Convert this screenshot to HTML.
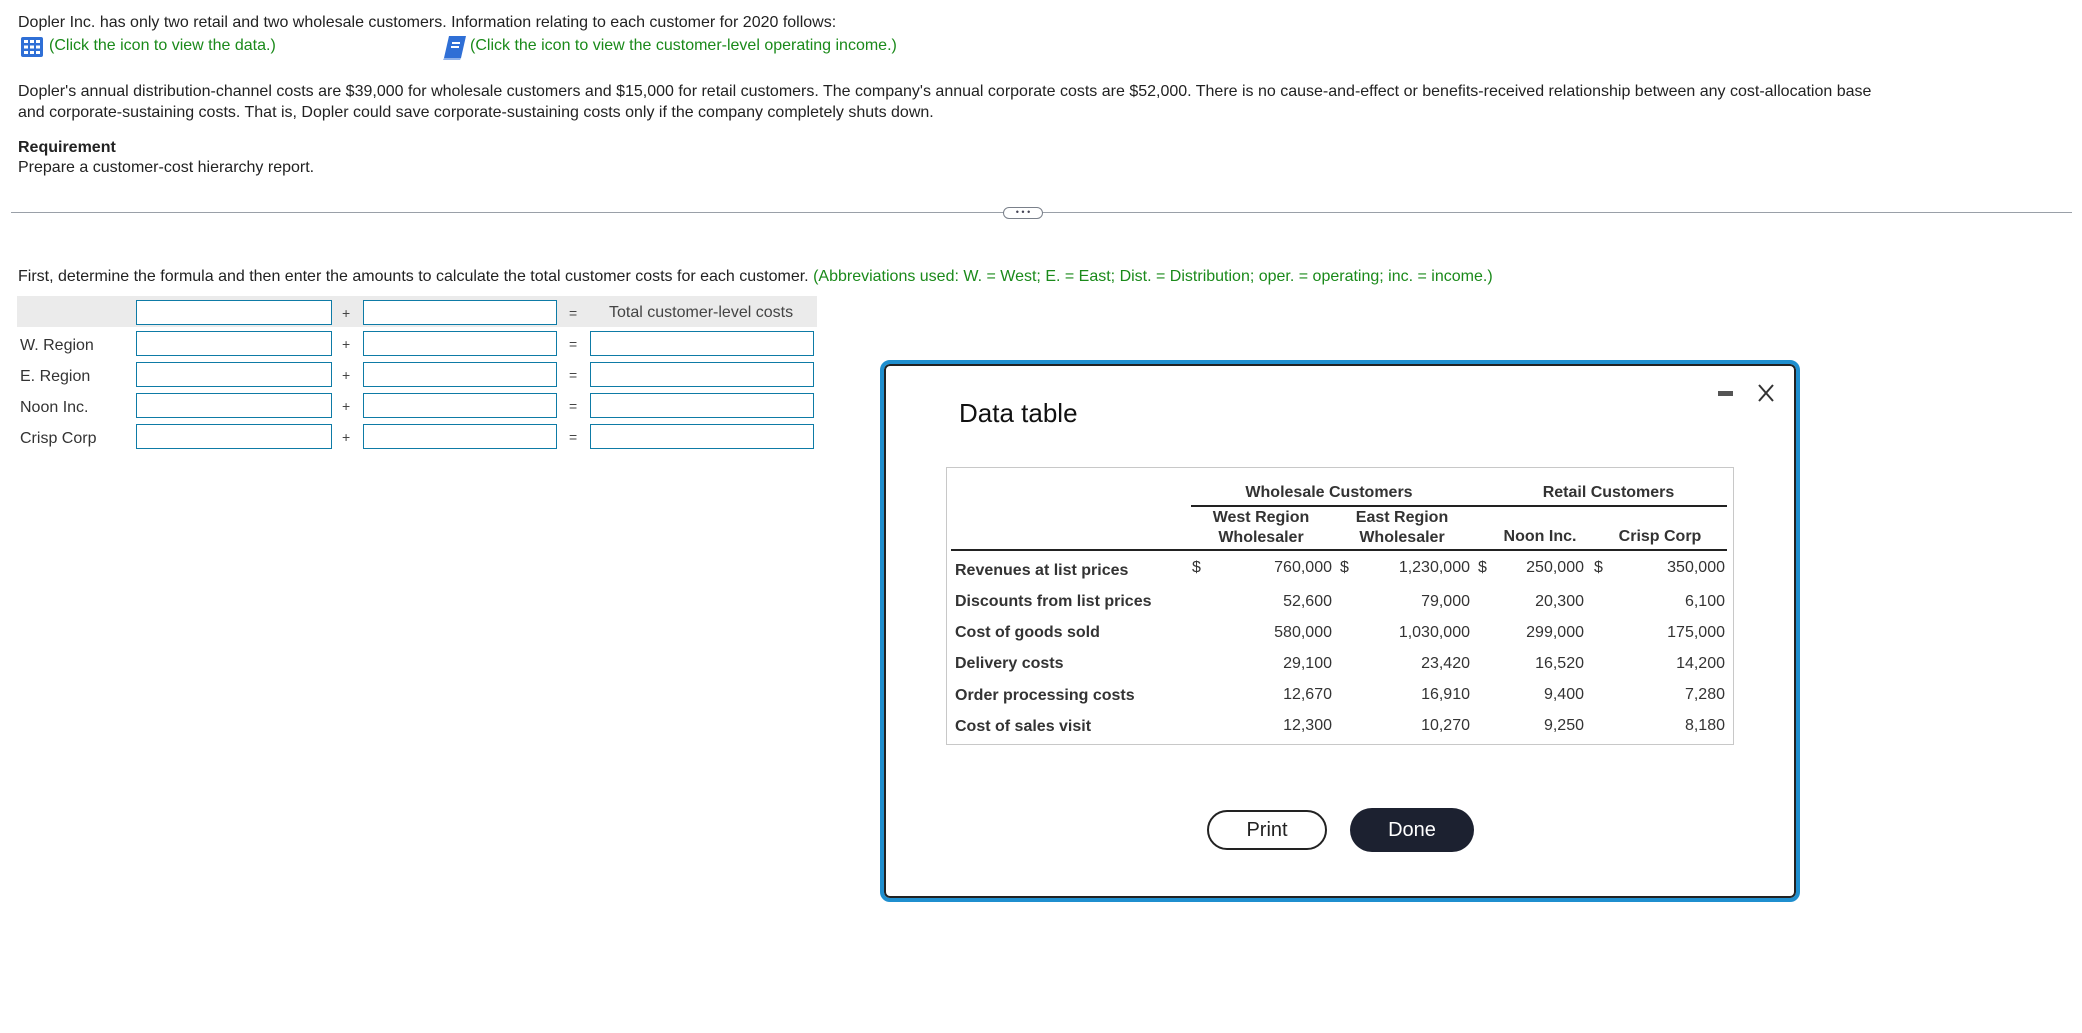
<!DOCTYPE html>
<html><head><meta charset="utf-8"><style>
*{box-sizing:border-box;margin:0;padding:0}
body{width:2082px;height:1033px;background:#fff;font-family:"Liberation Sans",Arial,sans-serif;font-size:16px;color:#222;position:relative;overflow:hidden}
.a{position:absolute;white-space:nowrap}
.g{color:#1a8a1a}
.inp{position:absolute;height:25px;border:1px solid #0e7ba6;background:#fff}
.op{position:absolute;font-size:14px;color:#444}
.lbl{position:absolute;left:20px;color:#333}
.modal{position:absolute;left:880px;top:360px;width:920px;height:542px;border:4px solid #1f8fcf;border-radius:10px;background:#fff;box-shadow:inset 0 0 0 2px #222}
.r{position:absolute;text-align:right;color:#333}
.lb{position:absolute;left:955px;font-weight:bold;color:#333}
</style></head><body>
<div class="a" style="left:18px;top:14px">Dopler Inc. has only two retail and two wholesale customers. Information relating to each customer for 2020 follows:</div>
<svg class="a" style="left:21px;top:37px" width="22" height="20"><rect x="0" y="0" width="22" height="20" rx="2" fill="#2f6fd6"/><g fill="#fff"><rect x="3" y="3" width="4" height="3"/><rect x="9" y="3" width="4" height="3"/><rect x="15" y="3" width="4" height="3"/><rect x="3" y="8.5" width="4" height="3"/><rect x="9" y="8.5" width="4" height="3"/><rect x="15" y="8.5" width="4" height="3"/><rect x="3" y="14" width="4" height="3"/><rect x="9" y="14" width="4" height="3"/><rect x="15" y="14" width="4" height="3"/></g></svg>
<div class="a g" style="left:49px;top:37px">(Click the icon to view the data.)</div>
<svg class="a" style="left:442px;top:35px" width="26" height="26"><path d="M7 1 H24 L19 23 H2 Z" fill="#2f6fd6"/><path d="M2 23 H19 L18 25 H1 Z" fill="#8fb2ea"/><rect x="10" y="7" width="8" height="2" fill="#fff"/><rect x="9" y="11" width="8" height="2" fill="#fff"/></svg>
<div class="a g" style="left:470px;top:37px">(Click the icon to view the customer-level operating income.)</div>
<div class="a" style="left:18px;top:83px">Dopler's annual distribution-channel costs are $39,000 for wholesale customers and $15,000 for retail customers. The company's annual corporate costs are $52,000. There is no cause-and-effect or benefits-received relationship between any cost-allocation base</div>
<div class="a" style="left:18px;top:104px">and corporate-sustaining costs. That is, Dopler could save corporate-sustaining costs only if the company completely shuts down.</div>
<div class="a" style="left:18px;top:139px;font-weight:bold">Requirement</div>
<div class="a" style="left:18px;top:159px">Prepare a customer-cost hierarchy report.</div>
<div class="a" style="left:11px;top:212px;width:2061px;height:1px;background:#9aa0a8"></div>
<div class="a" style="left:1003px;top:207px;width:40px;height:12px;border:1px solid #7a808a;border-radius:6px;background:#fff;font-size:9px;line-height:8px;text-align:center;color:#445">• • •</div>
<div class="a" style="left:18px;top:268px">First, determine the formula and then enter the amounts to calculate the total customer costs for each customer. <span class="g">(Abbreviations used: W. = West; E. = East; Dist. = Distribution; oper. = operating; inc. = income.)</span></div>
<div class="a" style="left:17px;top:296px;width:800px;height:31px;background:#ebebeb"></div>
<div class="inp" style="left:136px;top:300px;width:196px"></div>
<div class="op" style="left:342px;top:305px">+</div>
<div class="inp" style="left:363px;top:300px;width:194px"></div>
<div class="op" style="left:569px;top:305px">=</div>
<div class="a" style="left:609px;top:304px;color:#444;font-size:16px">Total customer-level costs</div>
<div class="lbl" style="top:337px">W. Region</div>
<div class="lbl" style="top:368px">E. Region</div>
<div class="lbl" style="top:399px">Noon Inc.</div>
<div class="lbl" style="top:430px">Crisp Corp</div>
<div class="inp" style="left:136px;top:331px;width:196px"></div><div class="op" style="left:342px;top:336px">+</div><div class="inp" style="left:363px;top:331px;width:194px"></div><div class="op" style="left:569px;top:336px">=</div><div class="inp" style="left:590px;top:331px;width:224px"></div>
<div class="inp" style="left:136px;top:362px;width:196px"></div><div class="op" style="left:342px;top:367px">+</div><div class="inp" style="left:363px;top:362px;width:194px"></div><div class="op" style="left:569px;top:367px">=</div><div class="inp" style="left:590px;top:362px;width:224px"></div>
<div class="inp" style="left:136px;top:393px;width:196px"></div><div class="op" style="left:342px;top:398px">+</div><div class="inp" style="left:363px;top:393px;width:194px"></div><div class="op" style="left:569px;top:398px">=</div><div class="inp" style="left:590px;top:393px;width:224px"></div>
<div class="inp" style="left:136px;top:424px;width:196px"></div><div class="op" style="left:342px;top:429px">+</div><div class="inp" style="left:363px;top:424px;width:194px"></div><div class="op" style="left:569px;top:429px">=</div><div class="inp" style="left:590px;top:424px;width:224px"></div>

<div class="modal"></div>
<div class="a" style="left:959px;top:398px;font-size:26px;color:#111">Data table</div>
<div class="a" style="left:1718px;top:391px;width:15px;height:5px;background:#555"></div>
<svg class="a" style="left:1757px;top:383px" width="18" height="20"><path d="M2 2 L16 18 M16 2 L2 18" stroke="#333" stroke-width="2"/></svg>
<div class="a" style="left:946px;top:467px;width:788px;height:278px;border:1px solid #c8c8c8"></div>
<div class="a" style="left:1191px;top:484px;width:276px;text-align:center;font-weight:bold;color:#333">Wholesale Customers</div>
<div class="a" style="left:1490px;top:484px;width:237px;text-align:center;font-weight:bold;color:#333">Retail Customers</div>
<div class="a" style="left:1191px;top:505px;width:536px;height:2px;background:#222"></div>
<div class="a" style="left:1206px;top:508px;width:110px;text-align:center;font-weight:bold;color:#333;line-height:20px;white-space:normal">West Region<br>Wholesaler</div>
<div class="a" style="left:1347px;top:508px;width:110px;text-align:center;font-weight:bold;color:#333;line-height:20px;white-space:normal">East Region<br>Wholesaler</div>
<div class="a" style="left:1490px;top:528px;width:100px;text-align:center;font-weight:bold;color:#333">Noon Inc.</div>
<div class="a" style="left:1610px;top:528px;width:100px;text-align:center;font-weight:bold;color:#333">Crisp Corp</div>
<div class="a" style="left:951px;top:549px;width:776px;height:2px;background:#222"></div>
<div class="lb" style="top:562px">Revenues at list prices</div>
<div class="lb" style="top:593px">Discounts from list prices</div>
<div class="lb" style="top:624px">Cost of goods sold</div>
<div class="lb" style="top:655px">Delivery costs</div>
<div class="lb" style="top:687px">Order processing costs</div>
<div class="lb" style="top:718px">Cost of sales visit</div>
<div class="a" style="left:1192px;top:559px;color:#333">$</div>
<div class="a" style="left:1340px;top:559px;color:#333">$</div>
<div class="a" style="left:1478px;top:559px;color:#333">$</div>
<div class="a" style="left:1594px;top:559px;color:#333">$</div>
<div class="r" style="left:1230px;width:102px;top:559px">760,000</div>
<div class="r" style="left:1370px;width:100px;top:559px">1,230,000</div>
<div class="r" style="left:1500px;width:84px;top:559px">250,000</div>
<div class="r" style="left:1624px;width:101px;top:559px">350,000</div>
<div class="r" style="left:1230px;width:102px;top:593px">52,600</div><div class="r" style="left:1370px;width:100px;top:593px">79,000</div><div class="r" style="left:1500px;width:84px;top:593px">20,300</div><div class="r" style="left:1624px;width:101px;top:593px">6,100</div>
<div class="r" style="left:1230px;width:102px;top:624px">580,000</div><div class="r" style="left:1370px;width:100px;top:624px">1,030,000</div><div class="r" style="left:1500px;width:84px;top:624px">299,000</div><div class="r" style="left:1624px;width:101px;top:624px">175,000</div>
<div class="r" style="left:1230px;width:102px;top:655px">29,100</div><div class="r" style="left:1370px;width:100px;top:655px">23,420</div><div class="r" style="left:1500px;width:84px;top:655px">16,520</div><div class="r" style="left:1624px;width:101px;top:655px">14,200</div>
<div class="r" style="left:1230px;width:102px;top:686px">12,670</div><div class="r" style="left:1370px;width:100px;top:686px">16,910</div><div class="r" style="left:1500px;width:84px;top:686px">9,400</div><div class="r" style="left:1624px;width:101px;top:686px">7,280</div>
<div class="r" style="left:1230px;width:102px;top:717px">12,300</div><div class="r" style="left:1370px;width:100px;top:717px">10,270</div><div class="r" style="left:1500px;width:84px;top:717px">9,250</div><div class="r" style="left:1624px;width:101px;top:717px">8,180</div>
<div class="a" style="left:1207px;top:810px;width:120px;height:40px;border:2px solid #222;border-radius:20px;text-align:center;line-height:36px;font-size:20px;color:#222">Print</div>
<div class="a" style="left:1350px;top:808px;width:124px;height:44px;background:#1c2130;border-radius:22px;text-align:center;line-height:44px;font-size:20px;color:#fff">Done</div>
</body></html>
